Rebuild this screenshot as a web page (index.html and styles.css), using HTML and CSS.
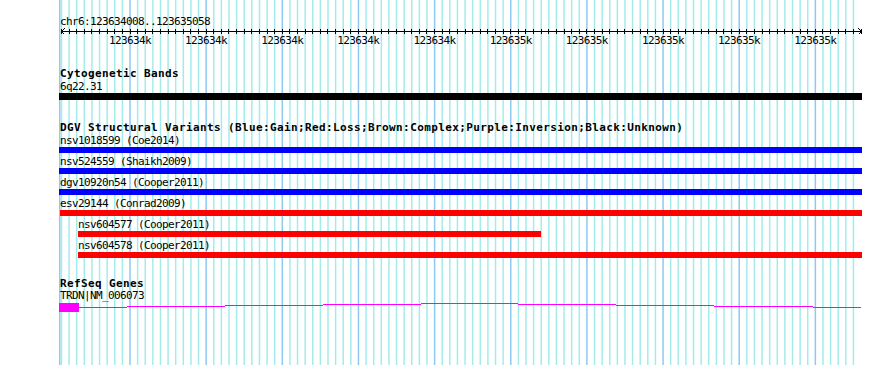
FILE: index.html
```html
<!DOCTYPE html>
<html>
<head>
<meta charset="utf-8">
<title>GBrowse panel</title>
<link rel="stylesheet" href="styles.css">
</head>
<body>
<div class="panel">
  <svg class="grid" width="800" height="365" viewBox="0 0 800 365">
    <defs>
      <g id="gb">
        <rect class="mj" x="-0.75" width="1.5" height="365"/>
        <rect class="mn" x="6.865" width="1.5" height="365"/>
        <rect class="mn" x="14.48" width="1.5" height="365"/>
        <rect class="mn" x="22.095" width="1.5" height="365"/>
        <rect class="mn" x="29.71" width="1.5" height="365"/>
        <rect class="mn" x="37.325" width="1.5" height="365"/>
        <rect class="mn" x="44.94" width="1.5" height="365"/>
        <rect class="mn" x="52.555" width="1.5" height="365"/>
        <rect class="mn" x="60.17" width="1.5" height="365"/>
        <rect class="mn" x="67.785" width="1.5" height="365"/>
      </g>
      <g id="tb">
        <rect x="-0.5" y="1" width="1" height="5"/>
        <rect x="7.115" y="1" width="1" height="5"/>
        <rect x="14.73" y="1" width="1" height="5"/>
        <rect x="22.345" y="1" width="1" height="5"/>
        <rect x="29.96" y="1" width="1" height="5"/>
        <rect x="37.575" y="1" width="1" height="5"/>
        <rect x="45.19" y="1" width="1" height="5"/>
        <rect x="52.805" y="1" width="1" height="5"/>
        <rect x="60.42" y="1" width="1" height="5"/>
        <rect x="68.035" y="1" width="1" height="5"/>
      </g>
    </defs>
    <rect class="mj" x="0" width="1.5" height="365"/>
    <use href="#gb" x="-5.15"/>
    <use href="#gb" x="71"/>
    <use href="#gb" x="147.15"/>
    <use href="#gb" x="223.3"/>
    <use href="#gb" x="299.45"/>
    <use href="#gb" x="375.6"/>
    <use href="#gb" x="451.75"/>
    <use href="#gb" x="527.9"/>
    <use href="#gb" x="604.05"/>
    <use href="#gb" x="680.2"/>
    <use href="#gb" x="756.35"/>
  </svg>

  <div class="content">
    <div class="pos">chr6:123634008..123635058</div>

    <svg class="ruler" width="803" height="6" viewBox="0 0 803 6">
      <g class="tk">
        <use href="#tb" x="-5.15"/>
        <use href="#tb" x="71"/>
        <use href="#tb" x="147.15"/>
        <use href="#tb" x="223.3"/>
        <use href="#tb" x="299.45"/>
        <use href="#tb" x="375.6"/>
        <use href="#tb" x="451.75"/>
        <use href="#tb" x="527.9"/>
        <use href="#tb" x="604.05"/>
        <use href="#tb" x="680.2"/>
        <use href="#tb" x="756.35"/>
      </g>
      <rect x="2" y="3" width="800" height="1"/>
      <path class="arrow" d="M5.5 0.5L2.5 3.5L5.5 6.5M799.5 0.5L802.5 3.5L799.5 6.5"/>
    </svg>

    <div class="ticklabels">
      <span>123634k</span><span>123634k</span><span>123634k</span><span>123634k</span><span>123634k</span>
      <span>123635k</span><span>123635k</span><span>123635k</span><span>123635k</span><span>123635k</span>
    </div>

    <section class="track cyto">
      <h2 class="title">Cytogenetic Bands</h2>
      <div class="feat">
        <div class="lbl">6q22.31</div>
        <div class="bar band"></div>
      </div>
    </section>

    <section class="track dgv">
      <h2 class="title">DGV Structural Variants (Blue:Gain;Red:Loss;Brown:Complex;Purple:Inversion;Black:Unknown)</h2>
      <div class="feat">
        <div class="lbl">nsv1018599 (Coe2014)</div>
        <div class="bar gain"></div>
      </div>
      <div class="feat">
        <div class="lbl">nsv524559 (Shaikh2009)</div>
        <div class="bar gain"></div>
      </div>
      <div class="feat">
        <div class="lbl">dgv10920n54 (Cooper2011)</div>
        <div class="bar gain"></div>
      </div>
      <div class="feat">
        <div class="lbl">esv29144 (Conrad2009)</div>
        <div class="bar loss esv"></div>
      </div>
      <div class="feat indent">
        <div class="lbl">nsv604577 (Cooper2011)</div>
        <div class="bar loss" style="width:463px"></div>
      </div>
      <div class="feat indent">
        <div class="lbl">nsv604578 (Cooper2011)</div>
        <div class="bar loss" style="width:784px"></div>
      </div>
    </section>

    <section class="track refseq">
      <h2 class="title">RefSeq Genes</h2>
      <div class="lbl">TRDN|NM_006073</div>
      <svg class="gene" width="803" height="10" viewBox="0 0 803 10">
        <rect x="0" y="0" width="20" height="9"/>
        <rect x="20" y="4" width="48" height="1"/>
        <rect x="68" y="3" width="98" height="1"/>
        <rect x="166" y="2" width="98" height="1"/>
        <rect x="264" y="1" width="98" height="1"/>
        <rect x="362" y="0" width="97" height="1"/>
        <rect x="459" y="1" width="98" height="1"/>
        <rect x="557" y="2" width="98" height="1"/>
        <rect x="655" y="3" width="99" height="1"/>
        <rect x="754" y="4" width="48" height="1"/>
      </svg>
    </section>
  </div>
</div>
</body>
</html>
```

FILE: styles.css
```css
html, body {
  margin: 0;
  padding: 0;
  background: #ffffff;
}

body {
  width: 890px;
  height: 365px;
  overflow: hidden;
}

.panel {
  position: relative;
  margin-left: 59px;
  width: 804px;
  height: 365px;
}

.grid {
  position: absolute;
  left: 0;
  top: 0;
  display: block;
}

.grid .mj { fill: #8ccaf0; }
.grid .mn { fill: #a4ecec; }

.content {
  position: relative;
  padding-top: 15px;
  font-family: "DejaVu Sans Mono", "Liberation Mono", monospace;
  font-size: 11px;
  line-height: 13px;
  letter-spacing: -0.62px;
  color: #000;
}

.pos {
  height: 13px;
  padding-left: 1px;
  white-space: nowrap;
}

.ruler {
  display: block;
  shape-rendering: crispEdges;
}

.ruler rect { fill: #000; }

.ruler .arrow {
  fill: none;
  stroke: #000;
  stroke-width: 1;
}

.ticklabels {
  display: flex;
  height: 13px;
  padding-left: 32.9px;
  white-space: nowrap;
}

.ticklabels span {
  flex: none;
  width: 76.15px;
  text-align: center;
}

.track { margin-top: 21px; }
.track.dgv { margin-top: 22px; }
.track.refseq { margin-top: 20px; }

.title {
  margin: 0;
  padding-left: 1px;
  font-size: 11px;
  font-weight: bold;
  line-height: 12px;
  letter-spacing: 0.38px;
  white-space: nowrap;
}

.refseq .title { line-height: 11px; }

.lbl {
  height: 13px;
  padding-left: 1px;
  white-space: nowrap;
}

.dgv .feat { margin-bottom: 2px; }

.feat.indent .lbl { padding-left: 19px; }
.feat.indent .bar { margin-left: 19px; }

.bar {
  width: 803px;
  height: 6px;
}

.bar.band { height: 7px; background: #000; }
.bar.gain { background: #0000ff; }
.bar.loss { background: #ff0000; }
.bar.esv { margin-left: 1px; width: 802px; }

.gene {
  display: block;
  margin-top: 1px;
  shape-rendering: crispEdges;
}

.gene rect { fill: #ff00ff; }
```
